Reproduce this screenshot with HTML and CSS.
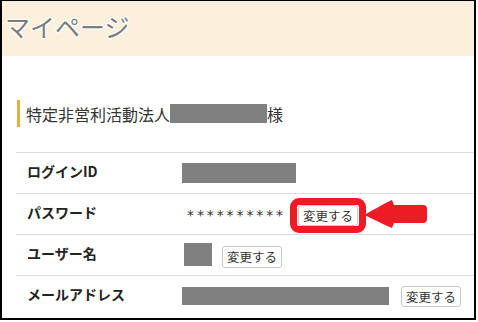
FILE: index.html
```html
<!DOCTYPE html>
<html lang="ja">
<head>
    <meta charset="UTF-8">
    <title>マイページ</title>
    <link rel="stylesheet" href="styles.css">
</head>
<body>
    <div class="frame">
        <div class="page-header">
            <h1>マイページ</h1>
        </div>

        <div class="content">
            <p class="org-name">特定非営利活動法人<span class="redact redact-org"></span>様</p>

            <div class="account-table">
                <div class="row">
                    <div class="label">ログインID</div>
                    <div class="value">
                        <span class="redact redact-id"></span>
                    </div>
                </div>
                <div class="row">
                    <div class="label">パスワード</div>
                    <div class="value">
                        <span class="masked">**********</span>
                        <span class="highlight">
                            <button class="change-btn">変更する</button>
                            <svg class="arrow" width="66" height="31" viewBox="0 0 66 31">
                                <path d="M1,16 C12,10 22,4 29,1 L31,6 L60,6 Q64,6 64,10 L64,20 Q64,24 60,24 L31,24 L29,29 C22,26 12,21 1,16 Z" fill="#ed1c24"/>
                            </svg>
                        </span>
                    </div>
                </div>
                <div class="row">
                    <div class="label">ユーザー名</div>
                    <div class="value">
                        <span class="redact redact-user"></span>
                        <button class="change-btn">変更する</button>
                    </div>
                </div>
                <div class="row">
                    <div class="label">メールアドレス</div>
                    <div class="value">
                        <span class="redact redact-mail"></span>
                        <button class="change-btn">変更する</button>
                    </div>
                </div>
            </div>
        </div>
    </div>
</body>
</html>
```

FILE: styles.css
```css
* {
    margin: 0;
    padding: 0;
    box-sizing: border-box;
}

body {
    font-family: "Noto Sans CJK JP", "Noto Sans", sans-serif;
    color: #333;
    background: #fff;
}

.frame {
    width: 476px;
    height: 320px;
    border: 2px solid #000;
    border-top-width: 1px;
    overflow: hidden;
}

.page-header {
    height: 55px;
    background: #faf0dc;
    display: flex;
    align-items: center;
    padding-left: 3px;
}

.page-header h1 {
    font-size: 25px;
    font-weight: normal;
    color: #7c7c7c;
    line-height: 1;
    margin-top: -4px;
    text-shadow: 1px 0 #fff, -1px 0 #fff, 0 1px #fff, 0 -1px #fff,
                 1px 1px #fff, -1px -1px #fff, 1px -1px #fff, -1px 1px #fff;
}

.content {
    padding-top: 44px;
}

.org-name {
    margin-left: 15px;
    border-left: 3px solid #e0b245;
    padding-left: 6px;
    height: 27px;
    display: flex;
    align-items: center;
    font-size: 16px;
}

.redact {
    display: inline-block;
    background: #808080;
}

.redact-org {
    width: 97px;
    height: 19px;
}

.account-table {
    margin-top: 25px;
    margin-left: 14px;
}

.row {
    display: flex;
    align-items: center;
    height: 41px;
    border-top: 1px solid #dcdcdc;
}

.label {
    width: 166px;
    padding-left: 11px;
    padding-bottom: 4px;
    font-size: 14px;
    font-weight: bold;
    color: #222;
}

.value {
    display: flex;
    align-items: center;
}

.redact-id {
    width: 114px;
    height: 20px;
}

.masked {
    margin-left: 5px;
    font-family: "DejaVu Sans", sans-serif;
    font-size: 14px;
    letter-spacing: 2.9px;
    color: #333;
    margin-top: 1px;
}

.highlight {
    position: relative;
    display: inline-flex;
    margin-left: 4px;
    border: 7px solid #ed1c24;
    border-radius: 9px;
    padding: 0 1px;
    margin-top: 2px;
}

.arrow {
    position: absolute;
    left: calc(100% + 4px);
    top: -6px;
}

.change-btn {
    font-family: "Noto Sans CJK JP", sans-serif;
    font-size: 12.5px;
    color: #333;
    background: #fff;
    border: 1px solid #c8c8c8;
    border-radius: 3px;
    padding: 0 4px;
    height: 21px;
    line-height: 19px;
}

.redact-user {
    margin-left: 2px;
    width: 28px;
    height: 23px;
    margin-bottom: 2px;
}

.redact-user + .change-btn {
    margin-left: 10px;
    height: 22px;
    margin-top: 3px;
}

.redact-mail {
    width: 207px;
    height: 18px;
}

.redact-mail + .change-btn {
    margin-left: 12px;
}
```
